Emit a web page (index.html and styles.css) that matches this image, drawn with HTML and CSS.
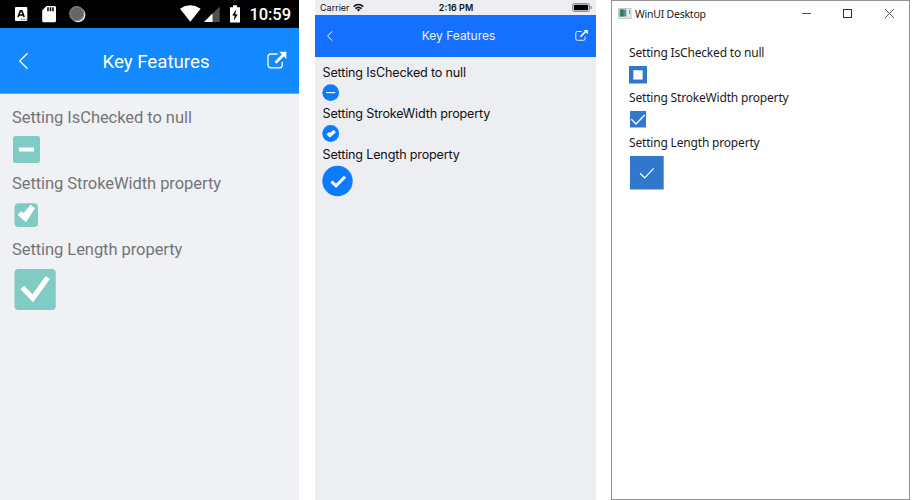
FILE: index.html
```html
<!DOCTYPE html>
<html lang="en">
<head>
<meta charset="utf-8">
<title>Key Features</title>
<link rel="stylesheet" href="styles.css">
</head>
<body>
<main class="gallery">
  <section class="android">
    <div class="android-status">
      <svg class="status-left" width="100" height="28" viewBox="0 0 100 28">
        <rect x="15" y="7" width="12.3" height="14" rx="1" fill="#fff"/>
        <path d="M18 17 20.400 10.800h1.400l2.400 6.200M19 15h4" fill="none" stroke="#000" stroke-width="1.6"/>
        <path d="M21 19.3h5.5" stroke="#555" stroke-dasharray="1 .6"/>
        <path d="M46.5 6h8a1.5 1.5 0 0 1 1.5 1.5v13.3a1.5 1.5 0 0 1-1.5 1.5H43.7a1.5 1.5 0 0 1-1.5-1.5V10.5z" fill="#fff"/>
        <path d="M48 7.3v4M50.5 7.3v4M53 7.3v4" stroke="#000" stroke-width="1.5"/>
        <circle cx="78" cy="14.8" r="7.4" fill="#eee"/>
        <circle cx="76.7" cy="13.7" r="7.6" fill="#666"/>
        <circle cx="76.7" cy="13.7" r="6.8" fill="none" stroke="#aaa" stroke-dasharray="1 1.2"/>
      </svg>
      <div class="status-right">
        <svg width="64" height="28" viewBox="180 0 64 28">
          <path d="M180 8.7Q190.3 2 200.6 8.7L190.3 21.8z" fill="#fff"/>
          <path d="M219.7 6.5V22H204z" fill="#505050"/>
          <path d="M212.5 13.6V22H204z" fill="#fff"/>
          <path d="M230 7.3h3V5.2h4v2.1h3v15.3h-10z" fill="#fff"/>
          <path d="M236.2 9.4l-4 6h2.4l-.8 5.2 4-6.2h-2.4z" fill="#000"/>
        </svg>
        <span class="android-time">10:59</span>
      </div>
    </div>
    <header class="android-bar">
      <svg width="12" height="20" viewBox="0 0 12 20"><path d="M9.5 2.2 1.8 10l7.7 7.8" fill="none" stroke="#fff" stroke-width="1.3"/></svg>
      <h1 class="android-title">Key Features</h1>
      <svg width="20" height="20" viewBox="0 0 20 20"><path d="M10.500 3H3.800A2.700 2.700 0 0 0 1 5.700v8.400a2.700 2.700 0 0 0 2.800 2.700h8.800a2.700 2.700 0 0 0 2.700-2.700V11" fill="none" stroke="#fff" stroke-width="1.300"/><path d="M8.500 11.700 16.200 4" stroke="#fff" stroke-width="2.700"/><path d="M12.200.8h7.200V8z" fill="#fff"/></svg>
    </header>
    <div class="android-content">
      <p class="android-label">Setting IsChecked to null</p>
      <svg class="android-check" width="46" height="34" viewBox="12 134 46 34"><rect x="13" y="136" width="27" height="27" rx="2.5" fill="#80cbc4"/><path d="M19 149.5h15" stroke="#fff" stroke-width="4"/></svg>
      <p class="android-label">Setting StrokeWidth property</p>
      <svg class="android-check" width="46" height="34" viewBox="12 200 46 34"><rect x="14.500" y="203.200" width="23.500" height="23.700" rx="4" fill="#80cbc4"/><path d="M17.700 215 20.800 211.300 23.800 213 30.500 204.800 35 208.200 26 222.300z" fill="#fff"/></svg>
      <p class="android-label">Setting Length property</p>
      <svg class="android-check" width="46" height="48" viewBox="12 266 46 48"><rect x="14.500" y="269" width="41.200" height="41" rx="4" fill="#80cbc4"/><path d="M22.300 287.500 32.800 298.300 47.800 277.500" fill="none" stroke="#fff" stroke-width="5.200"/></svg>
    </div>
  </section>

  <section class="ios">
    <div class="ios-status">
      <span class="carrier">Carrier <svg width="11" height="9" viewBox="0 0 11 9"><path d="M.7 3.700Q5.500-.7 10.300 3.700M2.400 5.700Q5.500 3 8.600 5.700" fill="none" stroke="#111" stroke-width="1.600"/><path d="M3.800 6.700Q5.500 5.300 7.200 6.700L5.500 8.500z" fill="#111"/></svg></span>
      <span class="ios-time">2:16 PM</span>
      <svg class="battery" width="20" height="9" viewBox="0 0 20 9"><rect x=".5" y=".5" width="17" height="8" rx="1.800" fill="#eee" stroke="#777" stroke-width=".8"/><rect x="1.800" y="1.700" width="14.400" height="5.600" rx=".7"/><path d="M19 3v3" stroke="#777"/></svg>
    </div>
    <header class="ios-bar">
      <svg width="8" height="12" viewBox="0 0 8 12"><path d="M6.300 1.300 1.600 6l4.700 4.700" fill="none" stroke="#fff" stroke-width="1"/></svg>
      <h1 class="ios-title">Key Features</h1>
      <svg width="13" height="12" viewBox="0 0 13 12"><path d="M6.500 1.500H2.500A1.600 1.600 0 0 0 .8 3.100v5.600a1.600 1.600 0 0 0 1.700 1.600h6a1.600 1.600 0 0 0 1.600-1.600V6.500" fill="none" stroke="#fff" stroke-width=".9"/><path d="M5.500 6.700 10.700 1.500" stroke="#fff" stroke-width="1.700"/><path d="M8.500 0h4.300v4.300z" fill="#fff"/></svg>
    </header>
    <div class="ios-content">
      <p class="ios-label">Setting IsChecked to null</p>
      <svg class="ios-check" width="32" height="21" viewBox="322 82 32 21"><circle cx="330.700" cy="92.600" r="8.400" fill="#0d7bff"/><path d="M326.200 92.600h9" stroke="#fff" stroke-width="1.100"/></svg>
      <p class="ios-label">Setting StrokeWidth property</p>
      <svg class="ios-check" width="32" height="21" viewBox="322 123 32 21"><circle cx="330.700" cy="133.500" r="8.400" fill="#0d7bff"/><path d="M327.700 133.300l2.200 2 4.900-4.300" fill="none" stroke="#fff" stroke-width="3.400"/></svg>
      <p class="ios-label">Setting Length property</p>
      <svg class="ios-check" width="32" height="34" viewBox="322 164 32 34"><circle cx="337.500" cy="181" r="15.200" fill="#0d7bff"/><path d="M331.500 181.500l4.500 4.300 9-9" fill="none" stroke="#fff" stroke-width="3"/></svg>
    </div>
  </section>

  <section class="desktop">
    <div class="titlebar">
      <svg width="14" height="12" viewBox="0 0 14 12"><rect x=".5" y=".5" width="12.500" height="10" fill="#e4e8e8" stroke="#c3c8c8"/><path d="M1.500 1.500h6.800v7H1.500z" fill="#588d9d"/><path d="M4 1.500v7" stroke="#297a68" stroke-width="3"/><path d="M11.500 2v4" stroke="#50a69d"/></svg>
      <span class="window-title">WinUI Desktop</span>
      <svg class="controls" width="94" height="12" viewBox="0 0 94 12"><path d="M0 5.500h9" stroke="#555"/><rect x="41.500" y="1.500" width="8" height="8" fill="none" stroke="#333"/><path d="M83 1l9 9M92 1l-9 9" stroke="#444" stroke-width=".9"/></svg>
    </div>
    <div class="desktop-content">
      <p class="desktop-label">Setting IsChecked to null</p>
      <svg class="desktop-check" width="38" height="25" viewBox="629 63 38 25"><path d="M629 66h18v17.500h-18z" fill="#2f78cb"/><rect x="633.500" y="70.300" width="9" height="9" fill="#fff" stroke="#d5dfea" stroke-width=".5"/></svg>
      <p class="desktop-label">Setting StrokeWidth property</p>
      <svg class="desktop-check" width="38" height="25" viewBox="629 108 38 25"><path d="M630 111h16v16.500h-16z" fill="#2f78cb"/><path d="M631.300 119.300l4.700 4.700 8.700-9" fill="none" stroke="#fff" stroke-width="1.300"/></svg>
      <p class="desktop-label">Setting Length property</p>
      <svg class="desktop-check" width="38" height="39" viewBox="629 153 38 39"><path d="M630 156h33.700v33.500H630z" fill="#2f78cb"/><path d="M640 173.300l4.700 4.500 9-9.400" fill="none" stroke="#fff" stroke-width="1.200"/></svg>
    </div>
  </section>
</main>
</body>
</html>
```
FILE: styles.css
```css
* { box-sizing: border-box; }
body { margin: 0; background: #fff; overflow: hidden; }
svg { display: block; flex: none; }
h1, p { margin: 0; font-weight: 400; white-space: nowrap; }

.gallery { display: grid; grid-template-columns: 299px 281px 299px; width: 915px; height: 500px; }

.android { background: #eff1f5; font-family: Roboto, sans-serif; }
.android-status { display: flex; justify-content: space-between; height: 28px; background: #000; }
.status-right { display: flex; align-items: center; gap: 5px; padding-right: 8px; }
.android-time { color: #fff; font-size: 16.5px; font-weight: 500; letter-spacing: -.05px; line-height: 28px; padding-top: 1px; }
.android-bar { display: flex; align-items: center; justify-content: space-between; height: 66px; padding: 0 12px 0 18px; background: #1388ff; border-bottom: 1px solid #5aaafa; }
.android-title { margin-left: 15px; padding-top: 2px; color: #fff; font-size: 18.7px; line-height: 24px; }
.android-content { padding: 14px 12px 0; }
.android-label { height: 20px; margin-top: 6px; color: #757575; font-size: 16.5px; letter-spacing: -.06px; line-height: 20px; }
.android-label:first-child { margin-top: 0; }
.android-check { margin-top: 6px; }

.ios { margin-left: 16px; margin-right: -16px; background: #edeef2; font-family: Inter, sans-serif; }
.ios-status { display: grid; grid-template-columns: 1fr auto 1fr; align-items: center; height: 15px; padding: 0 4px 0 5px; color: #111; font-size: 9px; line-height: 15px; }
.carrier { display: flex; align-items: center; gap: 3px; }
.ios-time { font-weight: 600; }
.battery { justify-self: end; }
.ios-bar { display: flex; align-items: center; justify-content: space-between; height: 42px; padding: 0 8px 0 11px; background: #156fff; }
.ios-title { margin-left: 8px; color: #e9f1ff; font-size: 12px; line-height: 18px; }
.ios-content { padding: 5px 7px; }
.ios-label { height: 20px; color: #111; font-size: 12.6px; letter-spacing: -.17px; line-height: 21px; padding-left: .5px; }

.desktop { margin-left: 31px; margin-right: -31px; border: 1px solid #929297; background: #fff; font-family: "Noto Sans", sans-serif; }
.titlebar { display: flex; align-items: center; height: 25px; padding: 0 13px 0 6px; }
.window-title { margin-left: 3px; color: #222; font-size: 10.5px; letter-spacing: -.23px; line-height: 20px; }
.controls { margin-left: auto; }
.desktop-content { padding: 17px; }
.desktop-label { height: 20px; color: #1b1b1b; font-size: 12px; letter-spacing: -.18px; line-height: 20px; }
```
